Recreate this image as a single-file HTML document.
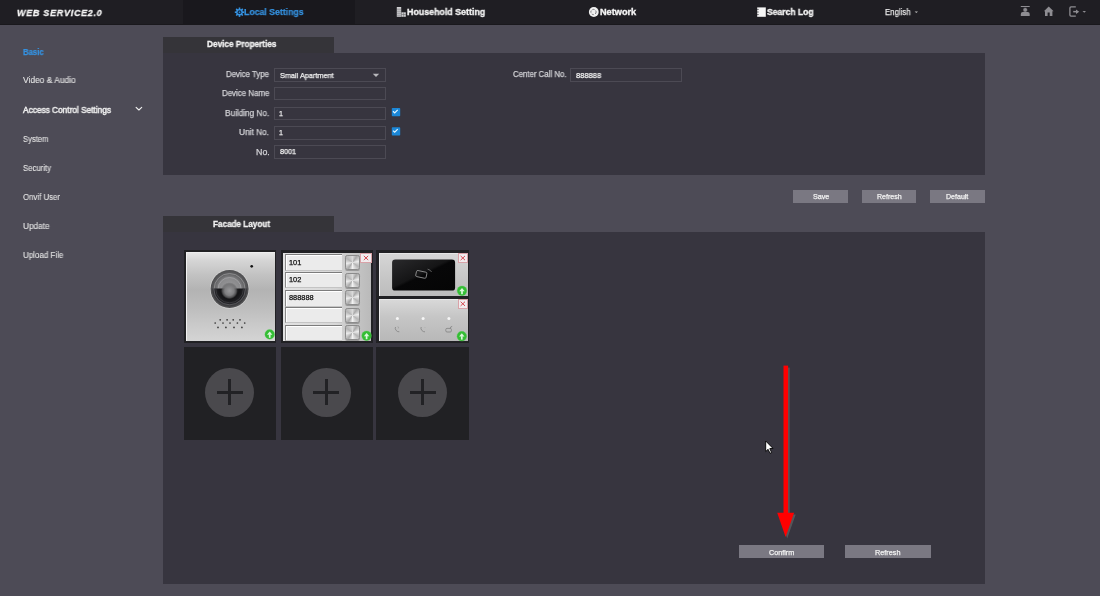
<!DOCTYPE html><html><head><meta charset="utf-8"><style>
html,body{margin:0;padding:0;width:1100px;height:596px;overflow:hidden;background:#4d4b56;font-family:"Liberation Sans",sans-serif;}
.a{position:absolute;box-sizing:border-box;}
.t{position:absolute;white-space:nowrap;line-height:1em;-webkit-text-stroke:0.25px currentColor;will-change:transform;}
svg{position:absolute;overflow:visible;}
</style></head><body>
<div class="a" style="left:0px;top:0px;width:1100px;height:25px;background:#1f1e23;"></div>
<div class="a" style="left:183px;top:0px;width:172px;height:25px;background:#19181d;"></div>
<div class="a" style="left:0px;top:24px;width:1100px;height:1px;background:#19181c;"></div>
<div class="t" style="left:16.87px;top:8.00px;font-size:9.5px;font-weight:bold;color:#f4f4f4;transform:scaleX(0.9457);transform-origin:0 0;font-style:italic;letter-spacing:0.08em;-webkit-text-stroke:0.3px currentColor;">WEB SERVICE2.0</div>
<div class="t" style="left:244.39px;top:8.00px;font-size:9.0px;font-weight:bold;color:#3592e0;transform:scaleX(0.9689);transform-origin:0 0;">Local Settings</div>
<div class="t" style="left:407.38px;top:8.00px;font-size:9.0px;font-weight:bold;color:#f4f4f4;transform:scaleX(0.9834);transform-origin:0 0;-webkit-text-stroke:0.35px currentColor;">Household Setting</div>
<div class="t" style="left:599.86px;top:8.00px;font-size:9.0px;font-weight:bold;color:#f4f4f4;transform:scaleX(1.0192);transform-origin:0 0;-webkit-text-stroke:0.35px currentColor;">Network</div>
<div class="t" style="left:766.74px;top:8.00px;font-size:9.0px;font-weight:bold;color:#f4f4f4;transform:scaleX(0.9491);transform-origin:0 0;-webkit-text-stroke:0.35px currentColor;">Search Log</div>
<div class="t" style="left:884.87px;top:8.00px;font-size:8.7px;font-weight:normal;color:#e8e8e8;transform:scaleX(0.8997);transform-origin:0 0;">English</div>
<div class="t" style="left:23.26px;top:48.00px;font-size:8.3px;font-weight:bold;color:#3592e0;transform:scaleX(0.9329);transform-origin:0 0;">Basic</div>
<div class="t" style="left:23.12px;top:76.00px;font-size:8.5px;font-weight:normal;color:#e4e4e4;transform:scaleX(0.9889);transform-origin:0 0;-webkit-text-stroke:0.1px currentColor;">Video &amp; Audio</div>
<div class="t" style="left:23.30px;top:106.00px;font-size:8.5px;font-weight:normal;color:#ececec;transform:scaleX(0.9752);transform-origin:0 0;-webkit-text-stroke:0.5px currentColor;">Access Control Settings</div>
<div class="t" style="left:23.02px;top:135.00px;font-size:8.5px;font-weight:normal;color:#e4e4e4;transform:scaleX(0.8988);transform-origin:0 0;-webkit-text-stroke:0.1px currentColor;">System</div>
<div class="t" style="left:23.01px;top:164.00px;font-size:8.5px;font-weight:normal;color:#e4e4e4;transform:scaleX(0.9121);transform-origin:0 0;-webkit-text-stroke:0.1px currentColor;">Security</div>
<div class="t" style="left:23.01px;top:193.00px;font-size:8.5px;font-weight:normal;color:#e4e4e4;transform:scaleX(0.9240);transform-origin:0 0;-webkit-text-stroke:0.1px currentColor;">Onvif User</div>
<div class="t" style="left:22.74px;top:222.00px;font-size:8.5px;font-weight:normal;color:#e4e4e4;transform:scaleX(0.9715);transform-origin:0 0;-webkit-text-stroke:0.1px currentColor;">Update</div>
<div class="t" style="left:22.76px;top:251.00px;font-size:8.5px;font-weight:normal;color:#e4e4e4;transform:scaleX(0.9378);transform-origin:0 0;-webkit-text-stroke:0.1px currentColor;">Upload File</div>
<div class="a" style="left:163px;top:37px;width:171px;height:16px;background:#353439;"></div>
<div class="a" style="left:163px;top:53px;width:822px;height:122px;background:#37353f;"></div>
<div class="t" style="left:206.92px;top:40.00px;font-size:8.35px;font-weight:bold;color:#f2f2f2;transform:scaleX(0.9865);transform-origin:0 0;-webkit-text-stroke:0.3px currentColor;">Device Properties</div>
<div class="t" style="left:226.07px;top:70.00px;font-size:8.5px;font-weight:normal;color:#d2d2d6;transform:scaleX(0.9197);transform-origin:0 0;">Device Type</div>
<div class="t" style="left:221.57px;top:89.00px;font-size:8.5px;font-weight:normal;color:#d2d2d6;transform:scaleX(0.9284);transform-origin:0 0;">Device Name</div>
<div class="t" style="left:225.14px;top:109.00px;font-size:8.5px;font-weight:normal;color:#d2d2d6;transform:scaleX(0.9646);transform-origin:0 0;">Building No.</div>
<div class="t" style="left:239.33px;top:128.00px;font-size:8.5px;font-weight:normal;color:#d2d2d6;transform:scaleX(0.9781);transform-origin:0 0;">Unit No.</div>
<div class="t" style="left:255.69px;top:148.00px;font-size:8.5px;font-weight:normal;color:#d2d2d6;transform:scaleX(1.0401);transform-origin:0 0;">No.</div>
<div class="a" style="left:274px;top:68px;width:112px;height:14px;border:1px solid #4c4a54;"></div>
<div class="a" style="left:274px;top:87px;width:112px;height:13px;border:1px solid #4c4a54;"></div>
<div class="a" style="left:274px;top:107px;width:112px;height:13px;border:1px solid #4c4a54;"></div>
<div class="a" style="left:274px;top:126px;width:112px;height:14px;border:1px solid #4c4a54;"></div>
<div class="a" style="left:274px;top:145px;width:112px;height:14px;border:1px solid #4c4a54;"></div>
<div class="t" style="left:279.63px;top:72.00px;font-size:7.7px;font-weight:normal;color:#f4f4f4;transform:scaleX(0.9508);transform-origin:0 0;">Small Apartment</div>
<div class="t" style="left:279.44px;top:110.00px;font-size:7.7px;font-weight:normal;color:#f4f4f4;transform:scaleX(0.9061);transform-origin:0 0;">1</div>
<div class="t" style="left:279.44px;top:129.00px;font-size:7.7px;font-weight:normal;color:#f4f4f4;transform:scaleX(0.9061);transform-origin:0 0;">1</div>
<div class="t" style="left:279.51px;top:148.00px;font-size:7.7px;font-weight:normal;color:#f4f4f4;transform:scaleX(0.9451);transform-origin:0 0;">8001</div>
<div class="t" style="left:575.90px;top:72.00px;font-size:7.7px;font-weight:normal;color:#f4f4f4;transform:scaleX(0.9790);transform-origin:0 0;">888888</div>
<div class="t" style="left:512.61px;top:70.00px;font-size:8.5px;font-weight:normal;color:#d2d2d6;transform:scaleX(0.9197);transform-origin:0 0;">Center Call No.</div>
<div class="a" style="left:570px;top:68px;width:112px;height:14px;border:1px solid #4c4a54;"></div>
<div class="a" style="left:793px;top:190px;width:55px;height:13px;background:#7a7882;"></div>
<div class="t" style="left:812.64px;top:193.00px;font-size:7.0px;font-weight:normal;color:#f2f2f2;transform:scaleX(1.0223);transform-origin:0 0;">Save</div>
<div class="a" style="left:862px;top:190px;width:54px;height:13px;background:#7a7882;"></div>
<div class="t" style="left:876.74px;top:193.00px;font-size:7.0px;font-weight:normal;color:#f2f2f2;transform:scaleX(1.0077);transform-origin:0 0;">Refresh</div>
<div class="a" style="left:930px;top:190px;width:55px;height:13px;background:#7a7882;"></div>
<div class="t" style="left:946.44px;top:193.00px;font-size:7.0px;font-weight:normal;color:#f2f2f2;transform:scaleX(1.0065);transform-origin:0 0;">Default</div>
<div class="a" style="left:163px;top:216px;width:171px;height:16px;background:#353439;"></div>
<div class="a" style="left:163px;top:232px;width:822px;height:352px;background:#37353f;"></div>
<div class="t" style="left:213.13px;top:220.00px;font-size:8.35px;font-weight:bold;color:#f2f2f2;transform:scaleX(0.9744);transform-origin:0 0;-webkit-text-stroke:0.3px currentColor;">Facade Layout</div>
<div class="a" style="left:184px;top:250px;width:92.19999999999999px;height:93px;background:#212124;"></div>
<div class="a" style="left:184px;top:347px;width:92.19999999999999px;height:93px;background:#212124;"></div>
<div class="a" style="left:280.5px;top:250px;width:92.80000000000001px;height:93px;background:#212124;"></div>
<div class="a" style="left:280.5px;top:347px;width:92.80000000000001px;height:93px;background:#212124;"></div>
<div class="a" style="left:376.4px;top:250px;width:92.90000000000003px;height:93px;background:#212124;"></div>
<div class="a" style="left:376.4px;top:347px;width:92.90000000000003px;height:93px;background:#212124;"></div>
<div class="a" style="left:205.2px;top:367.9px;width:49px;height:49px;border-radius:50%;background:#4a494d;"></div>
<div class="a" style="left:216.7px;top:390.9px;width:26.0px;height:3.0px;background:#222225;"></div>
<div class="a" style="left:228.2px;top:379.4px;width:3.0px;height:26.0px;background:#222225;"></div>
<div class="a" style="left:301.9px;top:367.9px;width:49px;height:49px;border-radius:50%;background:#4a494d;"></div>
<div class="a" style="left:313.4px;top:390.9px;width:26.0px;height:3.0px;background:#222225;"></div>
<div class="a" style="left:324.9px;top:379.4px;width:3.0px;height:26.0px;background:#222225;"></div>
<div class="a" style="left:398.4px;top:367.9px;width:49px;height:49px;border-radius:50%;background:#4a494d;"></div>
<div class="a" style="left:409.9px;top:390.9px;width:26.0px;height:3.0px;background:#222225;"></div>
<div class="a" style="left:421.4px;top:379.4px;width:3.0px;height:26.0px;background:#222225;"></div>
<div class="a" style="left:739px;top:545px;width:85px;height:13px;background:#7a7882;"></div>
<div class="t" style="left:769.34px;top:549.00px;font-size:7.0px;font-weight:normal;color:#f2f2f2;transform:scaleX(1.0270);transform-origin:0 0;">Confirm</div>
<div class="a" style="left:845px;top:545px;width:86px;height:13px;background:#7a7882;"></div>
<div class="t" style="left:875.42px;top:549.00px;font-size:7.0px;font-weight:normal;color:#f2f2f2;transform:scaleX(1.0417);transform-origin:0 0;">Refresh</div>
<svg style="left:0;top:0" width="1100" height="596">
<g transform="translate(239.5 12.2)" fill="#3592e0"><rect x="-0.8" y="-4.7" width="1.6" height="2.4" transform="rotate(0)"/><rect x="-0.8" y="-4.7" width="1.6" height="2.4" transform="rotate(45)"/><rect x="-0.8" y="-4.7" width="1.6" height="2.4" transform="rotate(90)"/><rect x="-0.8" y="-4.7" width="1.6" height="2.4" transform="rotate(135)"/><rect x="-0.8" y="-4.7" width="1.6" height="2.4" transform="rotate(180)"/><rect x="-0.8" y="-4.7" width="1.6" height="2.4" transform="rotate(225)"/><rect x="-0.8" y="-4.7" width="1.6" height="2.4" transform="rotate(270)"/><rect x="-0.8" y="-4.7" width="1.6" height="2.4" transform="rotate(315)"/><circle r="3.3"/><circle r="1.9" fill="#102a48"/><circle r="0.75" fill="#3592e0"/></g>
<g fill="#cfcfd2">
<rect x="396.8" y="7" width="4.4" height="9.8"/>
<rect x="401.4" y="12.3" width="4.4" height="4.5"/>
</g>
<g stroke="#5a5a5e" stroke-width="0.5">
<path d="M396.8 9.2 H401.2 M396.8 11.2 H401.2 M396.8 13.2 H401.2 M396.8 15.2 H401.2 M401.4 14.5 H405.8 M403.6 12.3 V16.8"/>
</g>
<circle cx="593.8" cy="12" r="4.9" fill="#f0f0f0"/>
<circle cx="593.5" cy="12" r="2.6" fill="none" stroke="#6a6a6e" stroke-width="0.9" stroke-dasharray="2.2 1.4"/>
<rect x="757.2" y="7.4" width="8.6" height="9.4" fill="#f6f6f6"/>
<path d="M757.2 9.4 h1.4 M757.2 12 h1.4 M757.2 14.6 h1.4" stroke="#3a3a3e" stroke-width="0.9"/>
<path d="M914.6 11.6 L918 11.6 L916.3 13 Z" fill="#bdbdbd"/>
<g fill="#8e8d92">
<rect x="1020.8" y="6" width="8.9" height="1"/>
<circle cx="1025.2" cy="9.9" r="2.3" stroke="#1f1e23" stroke-width="0.6"/>
<path d="M1020.8 16 V14 Q1020.8 12.1 1022.8 12.1 H1027.7 Q1029.7 12.1 1029.7 14 V16 Z"/>
<path d="M1043.9 11.3 L1048.75 6.6 L1053.6 11.3 Z"/>
<path d="M1045 11 H1052.4 V16 H1049.7 V12.4 H1047.6 V16 H1045 Z"/>
<path d="M1075.8 6.8 H1071 Q1069.9 6.8 1069.9 7.9 V15.1 Q1069.9 16.2 1071 16.2 H1075.8" fill="none" stroke="#8e8d92" stroke-width="1.3"/>
<rect x="1073.2" y="10.9" width="3" height="1.5"/>
<path d="M1076 9.4 L1079.2 11.65 L1076 13.9 Z"/>
<path d="M1082.5 11 L1086 11 L1084.25 12.7 Z"/>
</g>
<path d="M136.1 107.3 L138.9 110 L141.7 107.3" fill="none" stroke="#f0f0f0" stroke-width="1.1" stroke-linecap="round" stroke-linejoin="round"/>
<path d="M372.8 73.8 L379.2 73.8 L376 77 Z" fill="#b8b8bc"/>
<rect x="391.8" y="107.9" width="8.4" height="8.3" rx="0.8" fill="#1b87d7"/>
<path d="M393 111.3 L394.7 112.9 L397.7 109.9" fill="none" stroke="#e6f6ff" stroke-width="1.2"/>
<rect x="391.8" y="127.2" width="8.4" height="8.3" rx="0.8" fill="#1b87d7"/>
<path d="M393 130.6 L394.7 132.2 L397.7 129.2" fill="none" stroke="#e6f6ff" stroke-width="1.2"/>
</svg>
<div class="a" style="left:186px;top:252px;width:88.50px;height:89.00px;background:linear-gradient(#e6e6e6 0%,#d6d6d6 8%,#c2c2c2 25%,#b3b3b3 42%,#bdbdbd 62%,#cacaca 82%,#d4d4d4 100%);border-left:1px solid #f2f2f2;border-top:1px solid #eeeeee;"></div>
<svg style="left:0;top:0" width="1100" height="596"><defs><radialGradient id="lensO" cx="0.5" cy="0.5" r="0.5"><stop offset="0" stop-color="#9c9c9e"/><stop offset="0.55" stop-color="#8a8a8c"/><stop offset="0.82" stop-color="#5c5c5e"/><stop offset="1" stop-color="#4e4e50"/></radialGradient><radialGradient id="lensB" cx="0.5" cy="0.5" r="0.5"><stop offset="0" stop-color="#3a3a3c"/><stop offset="0.55" stop-color="#151517"/><stop offset="0.8" stop-color="#222226"/><stop offset="1" stop-color="#4a4a4c"/></radialGradient><radialGradient id="lensT" cx="0.5" cy="0.75" r="0.6"><stop offset="0" stop-color="#9a9a9a"/><stop offset="0.5" stop-color="#7a7a7c"/><stop offset="1" stop-color="#4a4a4c"/></radialGradient><radialGradient id="blob" cx="0.5" cy="0.5" r="0.5"><stop offset="0" stop-color="#98989a"/><stop offset="0.55" stop-color="#7e7e80"/><stop offset="0.8" stop-color="#6a6a6c" stop-opacity="0.7"/><stop offset="1" stop-color="#555" stop-opacity="0"/></radialGradient><linearGradient id="card" x1="0" y1="0" x2="1" y2="1"><stop offset="0" stop-color="#2a2a2c"/><stop offset="0.45" stop-color="#151516"/><stop offset="0.5" stop-color="#070708"/><stop offset="1" stop-color="#050505"/></linearGradient><clipPath id="bot"><rect x="200" y="288.4" width="60" height="30"/></clipPath></defs><circle cx="229.6" cy="289" r="19.7" fill="#d2d2d2"/><circle cx="229.6" cy="289" r="19" fill="url(#lensO)"/><circle cx="229.6" cy="289" r="15.5" fill="none" stroke="#a4a4a6" stroke-width="0.9" opacity="0.7"/><circle cx="229.6" cy="289" r="11.5" fill="none" stroke="#b0b0b2" stroke-width="0.9" opacity="0.7"/><g clip-path="url(#bot)"><circle cx="229.6" cy="289" r="18" fill="url(#lensB)"/><circle cx="229.6" cy="289" r="15.8" fill="none" stroke="#6a6a6e" stroke-width="0.7"/><circle cx="229.6" cy="289" r="13.8" fill="none" stroke="#4a4a4e" stroke-width="0.6"/></g><circle cx="229.4" cy="290.8" r="8.5" fill="url(#blob)"/><circle cx="251.7" cy="266.3" r="1.35" fill="#141414"/><circle cx="220.2" cy="319.8" r="0.85" fill="#383838"/><circle cx="227.1" cy="319.8" r="0.85" fill="#383838"/><circle cx="233.2" cy="319.8" r="0.85" fill="#383838"/><circle cx="240" cy="319.8" r="0.85" fill="#383838"/><circle cx="215.2" cy="323" r="0.85" fill="#383838"/><circle cx="223" cy="323" r="0.85" fill="#383838"/><circle cx="230" cy="323" r="0.85" fill="#383838"/><circle cx="237.4" cy="323" r="0.85" fill="#383838"/><circle cx="244.7" cy="323" r="0.85" fill="#383838"/><circle cx="218" cy="327.4" r="0.85" fill="#383838"/><circle cx="225.9" cy="327.4" r="0.85" fill="#383838"/><circle cx="234" cy="327.4" r="0.85" fill="#383838"/><circle cx="241.9" cy="327.4" r="0.85" fill="#383838"/><circle cx="269.7" cy="334.4" r="4.85" fill="#34bd34"/><circle cx="269.7" cy="334.4" r="4.85" fill="none" stroke="#5fd35f" stroke-width="0.5" opacity="0.6"/><path d="M267.0 334.79999999999995 L269.7 331.5 L272.4 334.79999999999995 Z" fill="#dcf7dc"/><rect x="268.84999999999997" y="334.4" width="1.7" height="3.4" fill="#dcf7dc"/></svg>
<div class="a" style="left:283px;top:253px;width:88.00px;height:88.20px;background:linear-gradient(90deg,#e2e2e2 0%,#d8d8d8 60%,#cdcdcd 70%,#bababa 100%);"></div>
<div class="a" style="left:285px;top:254.3px;width:56.50px;height:16.40px;background:#ebebeb;border-top:1.4px solid #7c7c7c;border-left:1.6px solid #8a8a8a;border-bottom:1px solid #c4c4c4;box-shadow:inset 1px 1px 0 #ffffff;"></div>
<div class="a" style="left:285px;top:271.9px;width:56.50px;height:16.40px;background:#ebebeb;border-top:1.4px solid #7c7c7c;border-left:1.6px solid #8a8a8a;border-bottom:1px solid #c4c4c4;box-shadow:inset 1px 1px 0 #ffffff;"></div>
<div class="a" style="left:285px;top:289.6px;width:56.50px;height:17.10px;background:#ebebeb;border-top:1.4px solid #7c7c7c;border-left:1.6px solid #8a8a8a;border-bottom:1px solid #c4c4c4;box-shadow:inset 1px 1px 0 #ffffff;"></div>
<div class="a" style="left:285px;top:307.3px;width:56.50px;height:16.00px;background:#ebebeb;border-top:1.4px solid #7c7c7c;border-left:1.6px solid #8a8a8a;border-bottom:1px solid #c4c4c4;box-shadow:inset 1px 1px 0 #ffffff;"></div>
<div class="a" style="left:285px;top:324.8px;width:56.50px;height:16.40px;background:#ebebeb;border-top:1.4px solid #7c7c7c;border-left:1.6px solid #8a8a8a;border-bottom:1px solid #c4c4c4;box-shadow:inset 1px 1px 0 #ffffff;"></div>
<div class="a" style="left:345.3px;top:255.2px;width:14.50px;height:15.30px;border-radius:2.2px;border:1px solid #8c8c8c;background:conic-gradient(#dadada 0deg,#a9a9a9 35deg,#ececec 80deg,#b4b4b4 125deg,#f2f2f2 180deg,#a9a9a9 215deg,#ececec 260deg,#b4b4b4 305deg,#dadada 360deg);box-shadow:0 1px 0 #9a9a9a;"></div>
<div class="a" style="left:345.3px;top:272.8px;width:14.50px;height:15.20px;border-radius:2.2px;border:1px solid #8c8c8c;background:conic-gradient(#dadada 0deg,#a9a9a9 35deg,#ececec 80deg,#b4b4b4 125deg,#f2f2f2 180deg,#a9a9a9 215deg,#ececec 260deg,#b4b4b4 305deg,#dadada 360deg);box-shadow:0 1px 0 #9a9a9a;"></div>
<div class="a" style="left:345.3px;top:290.3px;width:14.50px;height:15.20px;border-radius:2.2px;border:1px solid #8c8c8c;background:conic-gradient(#dadada 0deg,#a9a9a9 35deg,#ececec 80deg,#b4b4b4 125deg,#f2f2f2 180deg,#a9a9a9 215deg,#ececec 260deg,#b4b4b4 305deg,#dadada 360deg);box-shadow:0 1px 0 #9a9a9a;"></div>
<div class="a" style="left:345.3px;top:308px;width:14.50px;height:14.80px;border-radius:2.2px;border:1px solid #8c8c8c;background:conic-gradient(#dadada 0deg,#a9a9a9 35deg,#ececec 80deg,#b4b4b4 125deg,#f2f2f2 180deg,#a9a9a9 215deg,#ececec 260deg,#b4b4b4 305deg,#dadada 360deg);box-shadow:0 1px 0 #9a9a9a;"></div>
<div class="a" style="left:345.3px;top:325.4px;width:14.50px;height:14.60px;border-radius:2.2px;border:1px solid #8c8c8c;background:conic-gradient(#dadada 0deg,#a9a9a9 35deg,#ececec 80deg,#b4b4b4 125deg,#f2f2f2 180deg,#a9a9a9 215deg,#ececec 260deg,#b4b4b4 305deg,#dadada 360deg);box-shadow:0 1px 0 #9a9a9a;"></div>
<div class="t" style="left:289px;top:258.64px;font-size:7.4px;color:#111;">101</div>
<div class="t" style="left:289px;top:276.14px;font-size:7.4px;color:#111;">102</div>
<div class="t" style="left:289px;top:293.74px;font-size:7.4px;color:#111;">888888</div>
<div class="a" style="left:360.4px;top:253.2px;width:11.20px;height:9.50px;background:#f1ecee;border:1px solid #d9a2a8;"></div>
<svg style="left:0;top:0" width="1100" height="596"><path d="M363.8 255.85 L368.2 260.05 M368.2 255.85 L363.8 260.05" stroke="#d64850" stroke-width="1.0"/></svg>
<svg style="left:0;top:0" width="1100" height="596"><circle cx="366.6" cy="335.8" r="4.85" fill="#34bd34"/><circle cx="366.6" cy="335.8" r="4.85" fill="none" stroke="#5fd35f" stroke-width="0.5" opacity="0.6"/><path d="M363.90000000000003 336.2 L366.6 332.90000000000003 L369.3 336.2 Z" fill="#dcf7dc"/><rect x="365.75" y="335.8" width="1.7" height="3.4" fill="#dcf7dc"/></svg>
<div class="a" style="left:379px;top:253px;width:88.60px;height:42.90px;background:linear-gradient(#d6d6d6,#c8c8c8 50%,#bcbcbc);border-left:1px solid #ececec;border-top:1px solid #e6e6e6;"></div>
<svg style="left:0;top:0" width="1100" height="596"><rect x="392.1" y="259.6" width="63" height="31" rx="3.2" fill="url(#card)"/><rect x="416" y="271.3" width="10.6" height="6.2" rx="1.3" transform="rotate(12 421.3 274.4)" fill="none" stroke="#9a9a9a" stroke-width="0.8"/><path d="M427.6 269.2 Q430.2 269.6 431.6 272" fill="none" stroke="#8a8a8a" stroke-width="0.7"/><circle cx="462" cy="290.8" r="4.85" fill="#34bd34"/><circle cx="462" cy="290.8" r="4.85" fill="none" stroke="#5fd35f" stroke-width="0.5" opacity="0.6"/><path d="M459.3 291.2 L462 287.90000000000003 L464.7 291.2 Z" fill="#dcf7dc"/><rect x="461.15" y="290.8" width="1.7" height="3.4" fill="#dcf7dc"/></svg>
<div class="a" style="left:457.6px;top:253.1px;width:10.40px;height:9.90px;background:#f1ecee;border:1px solid #d9a2a8;"></div>
<svg style="left:0;top:0" width="1100" height="596"><path d="M460.6 255.95000000000002 L465.0 260.15000000000003 M465.0 255.95000000000002 L460.6 260.15000000000003" stroke="#d64850" stroke-width="1.0"/></svg>
<div class="a" style="left:379px;top:298.6px;width:88.50px;height:42.60px;background:linear-gradient(#d8d8d8,#c6c6c6 40%,#b8b8b8);border-left:1px solid #ececec;border-top:1px solid #e8e8e8;"></div>
<svg style="left:0;top:0" width="1100" height="596"><circle cx="397.4" cy="318.4" r="1.5" fill="#f6f6f6"/><circle cx="423.1" cy="318.4" r="1.5" fill="#f6f6f6"/><circle cx="448.9" cy="318.4" r="1.5" fill="#f6f6f6"/><path d="M395.5 327 q-0.8 1.8 0.6 3.4 q1.4 1.6 3.2 1.4" fill="none" stroke="#7a7a7a" stroke-width="0.7"/><path d="M397.6 326.6 l1 0.6 M398.4 327.2 l0 1.2" fill="none" stroke="#8a8a8a" stroke-width="0.5"/><path d="M421.2 327 q-0.8 1.8 0.6 3.4 q1.4 1.6 3.2 1.4" fill="none" stroke="#7a7a7a" stroke-width="0.7"/><path d="M424.6 327.5 l0.8 0" fill="none" stroke="#9a9a9a" stroke-width="0.5"/><rect x="445.8" y="328.4" width="5.6" height="3.6" rx="1.2" fill="none" stroke="#7a7a7a" stroke-width="0.7"/><path d="M450.2 328.4 q0.2 -2 2 -2" fill="none" stroke="#7a7a7a" stroke-width="0.7"/><circle cx="461.8" cy="336.2" r="4.85" fill="#34bd34"/><circle cx="461.8" cy="336.2" r="4.85" fill="none" stroke="#5fd35f" stroke-width="0.5" opacity="0.6"/><path d="M459.1 336.59999999999997 L461.8 333.3 L464.5 336.59999999999997 Z" fill="#dcf7dc"/><rect x="460.95" y="336.2" width="1.7" height="3.4" fill="#dcf7dc"/></svg>
<div class="a" style="left:457.6px;top:299px;width:10.40px;height:9.60px;background:#f1ecee;border:1px solid #d9a2a8;"></div>
<svg style="left:0;top:0" width="1100" height="596"><path d="M460.6 301.7 L465.0 305.90000000000003 M465.0 301.7 L460.6 305.90000000000003" stroke="#d64850" stroke-width="1.0"/></svg>
<svg style="left:0;top:0" width="1100" height="596"><g transform="translate(1.6 1.6)" fill="#5b5b5f" opacity="0.85"><rect x="783.5" y="366" width="4.6" height="150"/><path d="M777.2 512.8 L794.1 512.8 L785.6 537 Z"/></g><rect x="783.5" y="365.6" width="4.6" height="150" fill="#ff0000"/><path d="M777.2 512.8 L794.1 512.8 L785.6 537 Z" fill="#ff0000"/><path d="M765.7 441 L765.7 451.5 L768.1 449.3 L770 453.3 L771.6 452.6 L769.8 448.6 L773 448.4 Z" fill="#ffffff" stroke="#000" stroke-width="0.9" stroke-linejoin="round"/></svg>
</body></html>
